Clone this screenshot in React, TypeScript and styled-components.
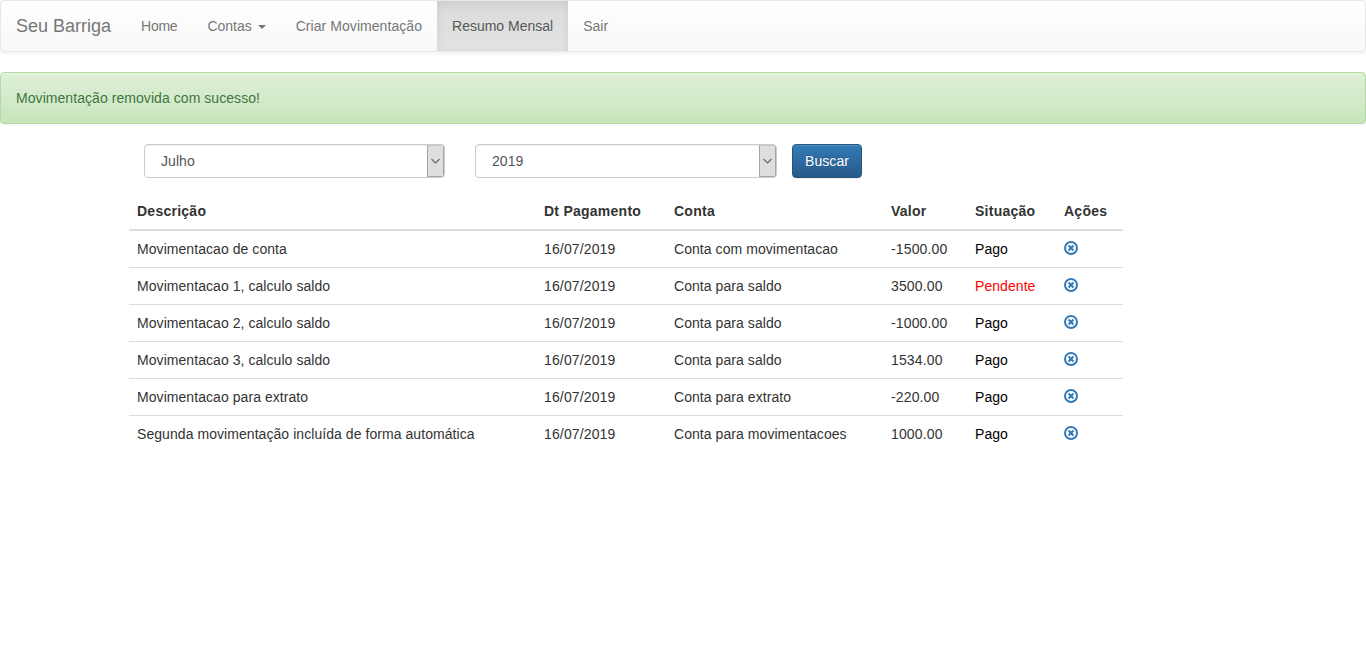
import React from "react";
import styled, { createGlobalStyle } from "styled-components";

const Global = createGlobalStyle`
  html, body { margin: 0; padding: 0; background: #fff; }
  body {
    font-family: "Liberation Sans", Arial, sans-serif;
    font-size: 14px;
    line-height: 20px;
    letter-spacing: 0.06px;
    color: #333;
  }
  * { box-sizing: border-box; }
`;

const Navbar = styled.nav`
  display: flex;
  height: 52px;
  margin-bottom: 20px;
  border: 1px solid #e7e7e7;
  border-radius: 4px;
  background-image: linear-gradient(to bottom, #fff 0, #f8f8f8 100%);
  box-shadow: inset 0 1px 0 rgba(255, 255, 255, 0.15), 0 1px 5px rgba(0, 0, 0, 0.075);
`;

const Brand = styled.a`
  padding: 15px;
  font-size: 18px;
  letter-spacing: 0;
  color: #777;
  text-shadow: 0 1px 0 rgba(255, 255, 255, 0.25);
`;

const NavLink = styled.a<{ $active?: boolean; $spacing?: number }>`
  display: block;
  padding: 15px;
  letter-spacing: ${(p) => p.$spacing ?? 0}px;
  color: ${(p) => (p.$active ? "#555" : "#777")};
  text-shadow: 0 1px 0 rgba(255, 255, 255, 0.25);
  ${(p) =>
    p.$active
      ? `background-image: linear-gradient(to bottom, #dbdbdb 0, #e2e2e2 100%);
         box-shadow: inset 0 3px 9px rgba(0, 0, 0, 0.075);`
      : ""}
`;

const Caret = styled.span`
  display: inline-block;
  width: 0;
  height: 0;
  margin-left: 2px;
  vertical-align: middle;
  border-top: 4px solid;
  border-right: 4px solid transparent;
  border-left: 4px solid transparent;
`;

const Alert = styled.div`
  height: 52px;
  margin-bottom: 20px;
  padding: 15px;
  border: 1px solid #b2dba1;
  border-radius: 4px;
  color: #3c763d;
  background-image: linear-gradient(to bottom, #dff0d8 0, #c8e5bc 100%);
  text-shadow: 0 1px 0 rgba(255, 255, 255, 0.2);
  box-shadow: inset 0 1px 0 rgba(255, 255, 255, 0.25), 0 1px 2px rgba(0, 0, 0, 0.05);
`;

const Content = styled.main`
  width: 994px;
  margin-left: 129px;
`;

const FilterForm = styled.form`
  display: flex;
  align-items: flex-start;
  margin-bottom: 15px;
  padding-left: 15px;
`;

const SelectBox = styled.div<{ $width: number; $gap: number }>`
  display: flex;
  width: ${(p) => p.$width}px;
  height: 34px;
  margin-right: ${(p) => p.$gap}px;
  border: 1px solid #ccc;
  border-radius: 4px;
  overflow: hidden;
  background: #fff;
  box-shadow: inset 0 1px 1px rgba(0, 0, 0, 0.075);
`;

const NativeSelect = styled.select`
  flex: 1;
  min-width: 0;
  height: 32px;
  padding: 0 12px 0 16px;
  border: 0;
  outline: 0;
  appearance: none;
  background: transparent;
  font: inherit;
  letter-spacing: inherit;
  color: #555;
`;

const SelectArrow = styled.span`
  display: flex;
  flex: 0 0 17px;
  align-items: center;
  justify-content: center;
  border: 1px solid #a6a6a6;
  border-top-color: #c4c4c4;
  background: #dedede;
  color: #666;
`;

const SearchButton = styled.button`
  width: 70px;
  height: 34px;
  padding: 6px 12px;
  border: 1px solid #245580;
  border-radius: 4px;
  font: inherit;
  letter-spacing: inherit;
  color: #fff;
  text-shadow: 0 -1px 0 rgba(0, 0, 0, 0.2);
  background-image: linear-gradient(to bottom, #337ab7 0, #265a88 100%);
  box-shadow: inset 0 1px 0 rgba(255, 255, 255, 0.15), 0 1px 1px rgba(0, 0, 0, 0.075);
`;

const Table = styled.table`
  width: 994px;
  table-layout: fixed;
  border-collapse: collapse;
  border-spacing: 0;
`;

const HeadCell = styled.th<{ $width: number }>`
  width: ${(p) => p.$width}px;
  padding: 8px;
  border-bottom: 2px solid #ddd;
  text-align: left;
  font-weight: 700;
  letter-spacing: 0.25px;
`;

const Cell = styled.td`
  padding: 8px;
  border-top: 1px solid #ddd;
  height: 37px;
  white-space: nowrap;
`;

const NumericCell = styled(Cell)`
  letter-spacing: 0.14px;
`;

const StatusCell = styled(Cell)<{ $pending: boolean }>`
  color: ${(p) => (p.$pending ? "red" : "#000")};
`;

const RemoveLink = styled.a`
  display: block;
  width: 14px;
  height: 14px;
  margin-top: -2px;
  margin-bottom: 1px;
  color: #337ab7;
  svg { display: block; }
`;

const rows = [
  ["Movimentacao de conta", "16/07/2019", "Conta com movimentacao", "-1500.00", "Pago"],
  ["Movimentacao 1, calculo saldo", "16/07/2019", "Conta para saldo", "3500.00", "Pendente"],
  ["Movimentacao 2, calculo saldo", "16/07/2019", "Conta para saldo", "-1000.00", "Pago"],
  ["Movimentacao 3, calculo saldo", "16/07/2019", "Conta para saldo", "1534.00", "Pago"],
  ["Movimentacao para extrato", "16/07/2019", "Conta para extrato", "-220.00", "Pago"],
  ["Segunda movimentação incluída de forma automática", "16/07/2019", "Conta para movimentacoes", "1000.00", "Pago"],
];

const headers: [string, number][] = [
  ["Descrição", 407],
  ["Dt Pagamento", 130],
  ["Conta", 217],
  ["Valor", 84],
  ["Situação", 89],
  ["Ações", 67],
];

const Chevron = () => (
  <svg width="9" height="6" viewBox="0 0 9 6" fill="none" stroke="currentColor" strokeWidth="1.1">
    <path d="M0.5 1 L4.5 5 L8.5 1" />
  </svg>
);

const RemoveIcon = () => (
  <svg width="14" height="14" viewBox="0 0 14 14" fill="none" stroke="currentColor">
    <circle cx="7" cy="7" r="6" strokeWidth="2" />
    <path d="M4.6 4.6 L9.4 9.4 M9.4 4.6 L4.6 9.4" strokeWidth="2.1" />
  </svg>
);

export default function App() {
  return (
    <>
      <Global />
      <Navbar>
        <Brand>Seu Barriga</Brand>
        <NavLink $spacing={-0.25}>Home</NavLink>
        <NavLink>
          Contas <Caret />
        </NavLink>
        <NavLink $spacing={0.06}>Criar Movimentação</NavLink>
        <NavLink $active>Resumo Mensal</NavLink>
        <NavLink>Sair</NavLink>
      </Navbar>
      <Alert>Movimentação removida com sucesso!</Alert>
      <Content>
        <FilterForm>
          <SelectBox $width={301} $gap={30}>
            <NativeSelect defaultValue="Julho">
              <option>Julho</option>
            </NativeSelect>
            <SelectArrow>
              <Chevron />
            </SelectArrow>
          </SelectBox>
          <SelectBox $width={302} $gap={15}>
            <NativeSelect defaultValue="2019">
              <option>2019</option>
            </NativeSelect>
            <SelectArrow>
              <Chevron />
            </SelectArrow>
          </SelectBox>
          <SearchButton type="button">Buscar</SearchButton>
        </FilterForm>
        <Table>
          <thead>
            <tr>
              {headers.map(([label, width]) => (
                <HeadCell key={label} $width={width}>
                  {label}
                </HeadCell>
              ))}
            </tr>
          </thead>
          <tbody>
            {rows.map((row) => (
              <tr key={row[0]}>
                <Cell>{row[0]}</Cell>
                <NumericCell>{row[1]}</NumericCell>
                <Cell>{row[2]}</Cell>
                <NumericCell>{row[3]}</NumericCell>
                <StatusCell $pending={row[4] === "Pendente"}>{row[4]}</StatusCell>
                <Cell>
                  <RemoveLink>
                    <RemoveIcon />
                  </RemoveLink>
                </Cell>
              </tr>
            ))}
          </tbody>
        </Table>
      </Content>
    </>
  );
}
